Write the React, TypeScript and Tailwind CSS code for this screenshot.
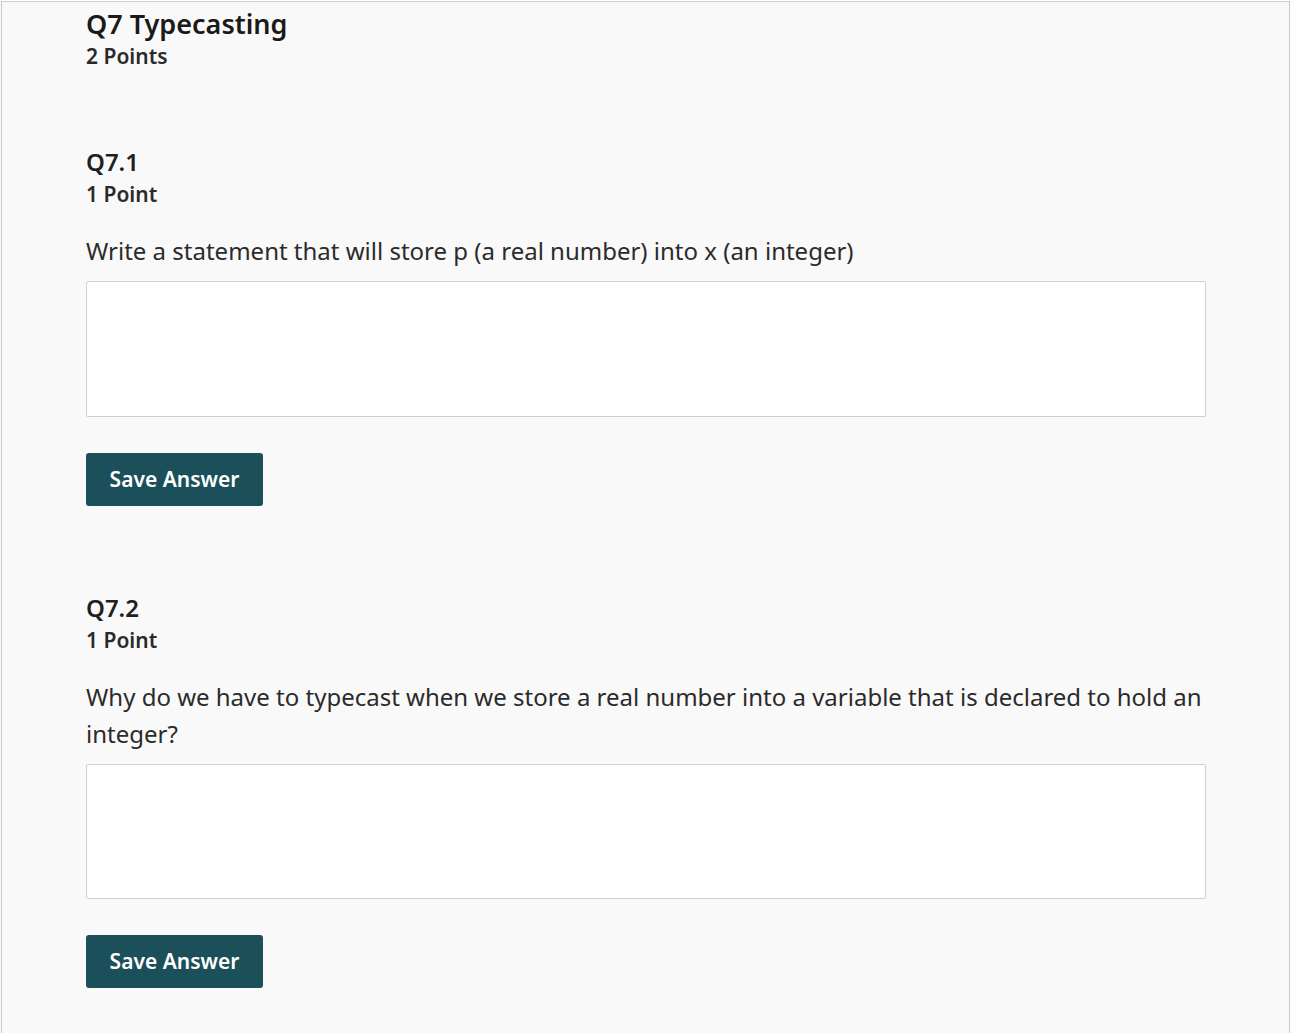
import React from "react";

function Question({ num, text, tall }: { num: string; text: string; tall: boolean }) {
  return (
    <div>
      <h2 className="text-[24px] leading-[32px] font-semibold text-[#1f1f1f]">{num}</h2>
      <div className="mt-[2px] text-[21px] leading-[28px] font-semibold text-[#2a2a2a]">1 Point</div>
      <p className="mt-[24px] text-[24px] leading-[37px] text-[#2b2b2b]">{text}</p>
      <textarea
        className={
          tall
            ? "mt-[12px] block w-[1120px] h-[136px] bg-white border border-[#cfcfcf] rounded-[2px] resize-none outline-none"
            : "mt-[12px] block w-[1120px] h-[135px] bg-white border border-[#cfcfcf] rounded-[2px] resize-none outline-none"
        }
      />
      <button className="mt-[36px] h-[53px] w-[177px] rounded-[3px] bg-[#1b4f5a] text-white text-[21px] font-semibold">
        Save Answer
      </button>
    </div>
  );
}

export default function App() {
  return (
    <div className="min-h-[1033px] bg-[#f9f9f9]" style={{ fontFamily: '"Noto Sans", "Open Sans", sans-serif' }}>
      <div className="ml-px mt-px w-[1289px] min-h-[1032px] border-l border-r border-t border-[#cccccc] bg-[#f9f9f9] pl-[84px] pt-[5px]">
        <h1 className="text-[27px] leading-[34px] font-semibold text-[#1a1a1a]">Q7 Typecasting</h1>
        <div className="mt-[1px] text-[21px] leading-[28px] font-semibold text-[#2a2a2a]">2 Points</div>
        <div className="mt-[76px] w-[1120px]">
          <Question tall num="Q7.1" text="Write a statement that will store p (a real number) into x (an integer)" />
        </div>
        <div className="mt-[86px] w-[1120px]">
          <Question
            tall={false}
            num="Q7.2"
            text="Why do we have to typecast when we store a real number into a variable that is declared to hold an integer?"
          />
        </div>
      </div>
    </div>
  );
}
